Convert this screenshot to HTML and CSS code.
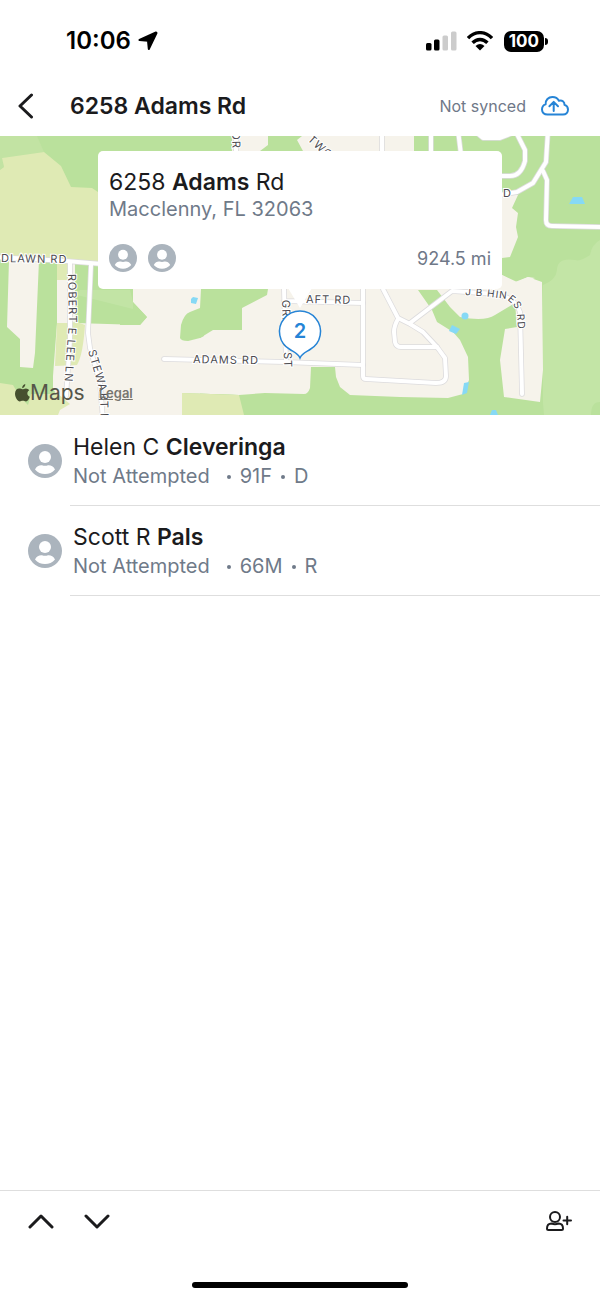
FILE: index.html
```html
<!DOCTYPE html>
<html lang="en">
  <head>
    <meta charset="UTF-8" />
    <meta name="viewport" content="width=device-width, initial-scale=1.0" />
    <title>6258 Adams Rd</title>
    <link rel="stylesheet" href="styles.css">
  </head>
  <body>
    <!-- shared avatar -->
    <svg class="sprite" aria-hidden="true">
      <symbol id="avatar" viewBox="0 0 34 34">
        <circle cx="17" cy="17" r="17" fill="#abb4bd" />
        <circle cx="17" cy="13" r="6" fill="#fff" />
        <path d="M7 25.5C8.500 22.200 11.500 21 14 21.300C16 22 18 22 20 21.300C22.500 21 25.500 22.200 27 25.500C24.500 28.500 21 30 17 30C13 30 9.500 28.500 7 25.500Z" fill="#fff" />
      </symbol>
    </svg>

    <!-- status bar -->
    <div class="status">
      <span class="time">10:06</span>
      <svg class="location" width="20" height="20" viewBox="0 0 20 20" aria-hidden="true">
        <path d="M18 1.500L1.500 9L10 9.800L10.800 18L18.500 2Z" stroke="#000" stroke-width="2" stroke-linejoin="round" />
      </svg>
      <div class="signals">
        <svg width="31" height="20" viewBox="0 0 31 20" aria-hidden="true">
          <rect x="0" y="12" width="5.500" height="7.500" rx="1.500" />
          <rect x="8" y="8.500" width="5.500" height="11" rx="1.500" />
          <rect x="16.500" y="4.500" width="5.500" height="15" rx="1.500" fill="#ccc" />
          <rect x="25" y="0.500" width="5.500" height="19" rx="1.500" fill="#ccc" />
        </svg>
        <svg width="26" height="20" viewBox="1 0 26 20" aria-hidden="true">
          <g fill="none" stroke="#000" stroke-width="3.400">
            <path d="M2 7.200C9-.2 19-.2 26 7.200" />
            <path d="M6.600 11.800C11 7.300 17 7.300 21.400 11.800" />
          </g>
          <path d="M9.500 15Q14 11.200 18.500 15L14 19.500Z" />
        </svg>
        <span class="battery">100</span>
      </div>
    </div>

    <header class="header">
      <button type="button" class="icon-btn back" aria-label="Back">
        <svg width="16" height="26" viewBox="0 0 16 26"><path d="M13.500 2L2 13L13.500 24" /></svg>
      </button>
      <h1 class="title">6258 Adams Rd</h1>
      <span class="sync">Not synced</span>
      <button type="button" class="icon-btn cloud" aria-label="Sync now">
        <svg width="28" height="20" viewBox="0 0 28 20">
          <path d="M6.500 18.600C3.200 18.600 1 16.500 1 13.500C1 10.800 2.600 9 4.600 8.400C4.300 4 7.500 1 11.400 1C14.400 1 16.800 2.500 17.900 4.700C21 3.700 23.700 5.700 23.500 8.900C25.700 9.600 27 11.300 27 13.500C27 16.500 24.900 18.600 22 18.600Z" />
          <path d="M12.700 15V6.200M8.400 10.200L12.700 5.900L17 10.200" />
        </svg>
      </button>
    </header>

    <!-- map -->
    <section class="map">
      <svg class="map-art" viewBox="0 136 600 279" preserveAspectRatio="xMidYMid slice" role="img" aria-label="Map around 6258 Adams Rd">
        <rect y="136" width="600" height="279" fill="#f6f3eb" />

        <!-- woods -->
        <g fill="#bae19c">
          <path d="M0 136H232V289H133V302L147 317L140 325L75 323V264H57V323L53 376V388L58 398V415H0Z" />
          <path d="M268 136H302L297 140L303 151H260L268 145Z" />
          <path d="M200 289H268L267 295L242 308V330H213L200 338L188 341Q181 341 180 338L181 325Q184 314 190 312L200 308Z" />
          <path d="M182 393L239 395L265 393L304 394Q308 394 310 388L311 367H335L336 377L340 387L350 395L400 397L448 398L463 394L469 380L468 357L460 340L453 332L437 322L432 310L418 290H437L450 307L460 317Q485 322 495 315L515 303L517 327L505 329L500 360L504 397L540 402L543 370L542 282L528 277L517 282L502 275L414 260V136H600V415H182Z" />
        </g>
        <path d="M132 288H202V308H200V415H150V325L147 317L133 302Z" fill="#f6f3eb" />
        <path d="M133 289V302L147 317L140 325H120V289Z" fill="#bae19c" />
        <path d="M200 308L190 312Q184 314 181 325L180 338Q181 341 188 341L200 338L204 336V289H201Z" fill="#bae19c" />
        <path d="M182 393L239 395V415H182Z" fill="#bae19c" />
        <path d="M600 240Q592 244 590 255Q580 262 575 260Q557 257 557 270Q556 280 543 285V403L544 415H600Z" fill="#c3e5a6" />
        <path d="M591 415Q591 402 600 402V415Z" fill="#bae19c" />
        <path d="M0 136H37L44 152L2 158L4 167L0 170Z" fill="#c2e3a3" />
        <path d="M77 295L133 309L133 302L130 290H80Z" fill="#c2e4a5" />

        <!-- fields -->
        <g fill="#dfeab4">
          <path d="M2 158L44 152L61 166L71 187L92 188L98 192V264L0 256V170L4 167Z" />
          <path d="M57 262H70V280H57Z" />
          <path d="M57 323L77 322L85 325Q83 355 77 365L55 366Z" />
          <path d="M0 383L13 385L20 397L28 405L31 394H58L70 404L60 410L58 415H0Z" />
          <path d="M182 393L239 395L244 415H182Z" />
        </g>

        <g fill="#f6f3eb">
          <path d="M9 260H39L35 353L33 368L20 367V339L7 327Z" />
          <path d="M57 280H70L69 323H57Z" />
          <path d="M53 376H70V394H58L53 388Z" />
          <path d="M502 193L518 195L512 208L518 213L516 227L518 237L510 257L502 258Z" />
          <path d="M502 275L515 282L528 277L535 278L502 290Z" />
        </g>

        <!-- water -->
        <g fill="#86d9f5">
          <path d="M573 197H582L585 204H569Z" />
          <path d="M191 299L193 297L198 298L196 304L191 303Z" />
          <circle cx="465" cy="316" r="3.500" />
          <path d="M452 325L460 329L456 334L449 331Z" />
          <path d="M464 383L469 382L467 393L462 395Z" />
          <path d="M492 410H496L498 415H490Z" />
        </g>

        <!-- roads, casing first and then the fill -->
        <defs>
          <g id="roads" fill="none" stroke-linejoin="round" stroke-linecap="round">
            <path d="M-4 257L66 261L102 264" />
            <path d="M70 263V340L66 396" />
            <path d="M91 265L88 333L90 348L100 383L103 420" />
            <path d="M164 359L285 362L363 365" />
            <path d="M363 280V376Q363 379 366 379L436 383Q446 383 446 376L445 358L437 347L423 332L410 324L398 318L383 289" />
            <path d="M398 319Q394 326 394 332L395 342Q396 347 401 347H437" />
            <path d="M410 323L452 291L467 292L495 294Q515 297 520 312L522 394" />
            <path d="M284 289L286 361M284 301L363 303" />
            <path d="M236 130V155M382 130V155M431 130V155M458 130L461 155" />
            <path d="M476 132L483 138H500L510 134" />
            <path d="M516 132L525 150V161Q521 176 510 176H500" />
            <path d="M548 130L546 162L533 183L517 192L500 195" />
            <path d="M543 171L547 180L546 220Q546 226 552 226L605 227" />
          </g>
        </defs>
        <use href="#roads" stroke="#dcdbdd" stroke-width="5.500" />
        <use href="#roads" stroke="#fff" stroke-width="4" />

        <!-- road names -->
        <defs>
          <path id="robert" d="M68 274L69 320L64 390" />
          <path id="stewart" d="M88 351L100 392L101 430" />
          <path id="hines" d="M465 295L490 297L506 299Q517 306 517 315L519 340" />
        </defs>
        <g class="road-name">
          <text x="1" y="262" transform="rotate(1 1 262)">DLAWN RD</text>
          <text><textPath href="#robert">ROBERT E LEE LN</textPath></text>
          <text><textPath href="#stewart">STEWART RD</textPath></text>
          <text x="193" y="363" transform="rotate(1 193 363)">ADAMS RD</text>
          <text x="306" y="303" transform="rotate(1 306 303)">AFT RD</text>
          <text x="282" y="300" transform="rotate(88 282 300)">GRIFFIS ST</text>
          <text class="bend"><textPath href="#hines">J B HINES RD</textPath></text>
          <text x="503" y="197">D</text>
          <text x="232" y="132" transform="rotate(88 232 132)">DR</text>
          <text x="307" y="140" transform="rotate(42 307 140)">TWO</text>
        </g>

        <!-- pin -->
        <path d="M288 288H312L300 308Z" fill="#fff" />
        <path d="M300 358C298 353 294 352 290 349.500A20.500 20.500 0 1 1 310 349.500C306 352 302 353 300 358Z" fill="#fff" stroke="#2684d6" stroke-width="1.500" />
        <text class="pin-count" x="300" y="338">2</text>
      </svg>

      <div class="card">
        <h2 class="name">6258 <b>Adams</b> Rd</h2>
        <p class="city">Macclenny, FL 32063</p>
        <div class="card-foot">
          <svg class="avatar-sm"><use href="#avatar" /></svg>
          <svg class="avatar-sm"><use href="#avatar" /></svg>
          <span class="distance">924.5 mi</span>
        </div>
      </div>

      <div class="credits">
        <svg width="15" height="18" viewBox="0 0 15 18" aria-hidden="true">
          <path d="M10.300 0C10.500 2 8.900 4.200 7.200 4.200C6.900 2.300 8.600 .2 10.300 0ZM7.500 5.200C8.300 5.200 9.300 4.400 10.900 4.400C12.300 4.400 13.500 5.200 14.200 6.200C11.500 7.800 11.900 11.600 14.800 12.800C14 15 12.600 17.500 11 17.500C9.900 17.500 9.300 16.800 7.900 16.800C6.500 16.800 5.800 17.500 4.800 17.500C2.700 17.500 0 13.300 0 9.700C0 6.400 2 4.500 4.200 4.500C5.700 4.500 6.700 5.200 7.500 5.200Z" />
        </svg>
        <span class="maps">Maps</span>
        <a class="legal" href="#legal">Legal</a>
      </div>
    </section>

    <!-- people at this address -->
    <ul class="people">
      <li class="person">
        <svg class="avatar"><use href="#avatar" /></svg>
        <div class="person-info">
          <h3 class="name">Helen C <b>Cleveringa</b></h3>
          <p class="detail"><span class="result">Not Attempted</span><i class="dot"></i>91F<i class="dot"></i>D</p>
        </div>
      </li>
      <li class="person">
        <svg class="avatar"><use href="#avatar" /></svg>
        <div class="person-info">
          <h3 class="name">Scott R <b>Pals</b></h3>
          <p class="detail"><span class="result">Not Attempted</span><i class="dot"></i>66M<i class="dot"></i>R</p>
        </div>
      </li>
    </ul>

    <footer class="toolbar">
      <div class="tools">
        <button type="button" class="icon-btn" aria-label="Previous address">
          <svg width="26" height="16" viewBox="0 0 26 16"><path d="M2 14L13 3L24 14" /></svg>
        </button>
        <button type="button" class="icon-btn" aria-label="Next address">
          <svg width="26" height="16" viewBox="0 0 26 16"><path d="M2 3L13 14L24 3" /></svg>
        </button>
        <button type="button" class="icon-btn add" aria-label="Add person">
          <svg width="26" height="20" viewBox="0 0 26 20">
            <circle cx="9" cy="6" r="5" />
            <path d="M5.500 12.500C2.500 12.500 1 14.500 1 17.500Q1 19 2.500 19H15.500Q17 19 17 17.500C17 14.500 15.500 12.500 12.500 12.500Q9 14 5.500 12.500Z" />
            <path d="M17.500 9.500H25M21.200 5.700V13.300" />
          </svg>
        </button>
      </div>
      <div class="home-bar"></div>
    </footer>
  </body>
</html>
```

FILE: styles.css
```css
* {
  box-sizing: border-box;
}

body {
  margin: 0;
  min-height: 100vh;
  display: flex;
  flex-direction: column;
  background-color: #fff;
  color: #1b1b1d;
  font-family: Inter, "Liberation Sans", sans-serif;
}

h1,
h2,
h3,
p,
ul {
  margin: 0;
  padding: 0;
}

svg {
  display: block;
  flex-shrink: 0;
}

.sprite {
  position: absolute;
  width: 0;
  height: 0;
}

/* status bar */
.status {
  display: flex;
  align-items: center;
  padding: 26px 56px 0 66px;
  color: #000;
}

.time {
  font-size: 24px;
  line-height: 30px;
  font-weight: 600;
}

.location {
  margin-left: 7px;
}

.signals {
  display: flex;
  align-items: center;
  gap: 10px;
  margin-left: auto;
}

.battery {
  position: relative;
  padding: 0 5px;
  margin-left: 1px;
  border-radius: 7px;
  background-color: #000;
  color: #fff;
  font-size: 17px;
  line-height: 21px;
  font-weight: 700;
}

.battery::after {
  content: "";
  position: absolute;
  top: 7px;
  right: -4px;
  width: 3px;
  height: 7px;
  border-radius: 0 3px 3px 0;
  background-color: #000;
}

/* header */
.header {
  display: flex;
  align-items: center;
  padding: 20px 31px 0 18px;
  height: 80px;
}

.icon-btn {
  padding: 0;
  border: 0;
  background: none;
  cursor: pointer;
}

.icon-btn svg {
  fill: none;
  stroke: #1b1b1d;
  stroke-width: 3;
  stroke-linecap: round;
  stroke-linejoin: round;
}

.title {
  margin-left: 36px;
  font-size: 23px;
  line-height: 28px;
  font-weight: 600;
}

.sync {
  margin-left: auto;
  color: #6f7888;
  font-size: 16px;
}

.cloud {
  margin-left: 15px;
}

.cloud svg {
  stroke: #2684d6;
  stroke-width: 2;
}

/* map, everything is stacked in one grid cell */
.map {
  display: grid;
}

.map > * {
  grid-area: 1 / 1;
}

.map-art {
  width: 100%;
  aspect-ratio: 600 / 279;
}

.road-name {
  fill: #4c4b50;
  stroke: #fff;
  stroke-width: 2px;
  paint-order: stroke;
  font-size: 11px;
  letter-spacing: 1px;
}

.road-name .bend {
  font-size: 10px;
}

.pin-count {
  fill: #2684d6;
  font-size: 20px;
  font-weight: 600;
  text-anchor: middle;
}

.card {
  align-self: start;
  margin: 15px 98px 0;
  padding: 16px 11px 17px;
  border-radius: 5px;
  background-color: #fff;
}

.name {
  font-size: 23px;
  line-height: 30px;
  font-weight: 400;
}

.name b {
  font-weight: 600;
}

.city {
  color: #6f7a89;
  font-size: 20px;
  line-height: 24px;
}

.card-foot {
  display: flex;
  align-items: center;
  gap: 11px;
  margin-top: 23px;
}

.avatar-sm {
  width: 28px;
  height: 28px;
}

.distance {
  margin-left: auto;
  color: #6f7888;
  font-size: 18px;
}

.credits {
  align-self: end;
  display: flex;
  align-items: center;
  padding: 0 15px 8px;
  color: #555548;
}

.credits svg {
  fill: #46502f;
}

.maps {
  font-size: 21px;
  line-height: 28px;
}

.legal {
  margin-left: 14px;
  color: #77766f;
  font-size: 13px;
  line-height: 24px;
  font-weight: 600;
}

/* people */
.people {
  padding-top: 1px;
  list-style: none;
}

.person {
  display: flex;
  align-items: center;
  padding-left: 28px;
}

.avatar {
  width: 34px;
  height: 34px;
}

.person-info {
  flex: 1;
  margin-left: 8px;
  padding: 16px 3px 15px;
  border-bottom: 1px solid #dedede;
}

.detail {
  display: flex;
  align-items: center;
  color: #6f7a89;
  font-size: 20px;
  line-height: 28px;
}

.result {
  margin-right: 8px;
}

.dot {
  width: 4px;
  height: 4px;
  margin: 2px 9px 0;
  border-radius: 50%;
  background-color: #6f7a89;
}

/* bottom toolbar */
.toolbar {
  margin-top: auto;
  border-top: 1px solid #dedede;
}

.tools {
  display: flex;
  align-items: center;
  gap: 30px;
  padding: 20px 28px 0;
}

.add {
  margin-left: auto;
}

.add svg {
  stroke-width: 2;
}

.home-bar {
  width: 36%;
  height: 6px;
  margin: 51px auto 12px;
  border-radius: 3px;
  background-color: #000;
}
```
